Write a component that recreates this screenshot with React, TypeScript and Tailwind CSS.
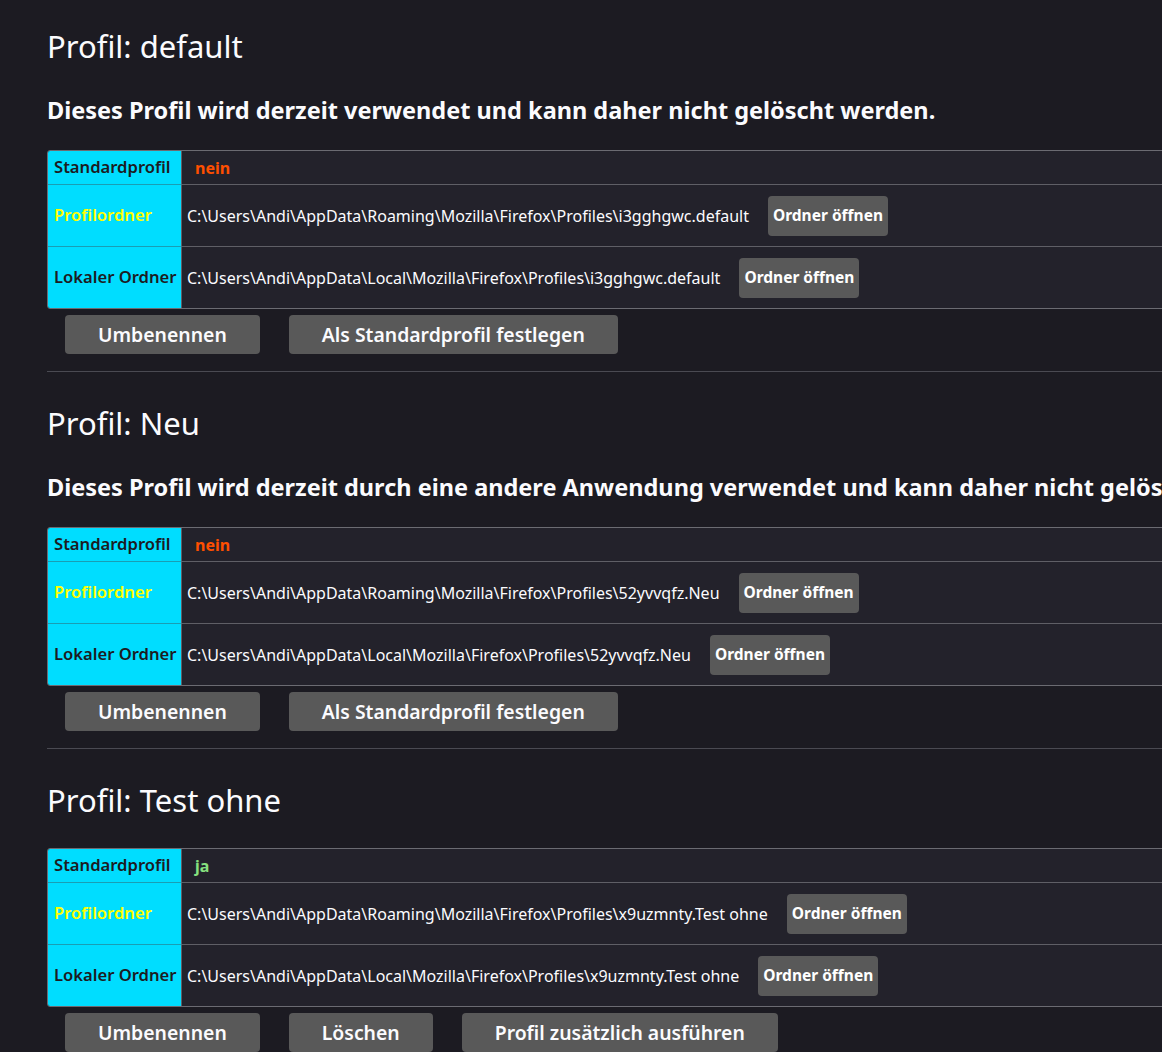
const profiles = [
  {
    name: 'default',
    note: 'Dieses Profil wird derzeit verwendet und kann daher nicht gelöscht werden.',
    isDefault: false,
    root: 'C:\\Users\\Andi\\AppData\\Roaming\\Mozilla\\Firefox\\Profiles\\i3gghgwc.default',
    local: 'C:\\Users\\Andi\\AppData\\Local\\Mozilla\\Firefox\\Profiles\\i3gghgwc.default',
    actions: ['Umbenennen', 'Als Standardprofil festlegen'],
  },
  {
    name: 'Neu',
    note: 'Dieses Profil wird derzeit durch eine andere Anwendung verwendet und kann daher nicht gelöscht werden.',
    isDefault: false,
    root: 'C:\\Users\\Andi\\AppData\\Roaming\\Mozilla\\Firefox\\Profiles\\52yvvqfz.Neu',
    local: 'C:\\Users\\Andi\\AppData\\Local\\Mozilla\\Firefox\\Profiles\\52yvvqfz.Neu',
    actions: ['Umbenennen', 'Als Standardprofil festlegen'],
  },
  {
    name: 'Test ohne',
    note: '',
    isDefault: true,
    root: 'C:\\Users\\Andi\\AppData\\Roaming\\Mozilla\\Firefox\\Profiles\\x9uzmnty.Test ohne',
    local: 'C:\\Users\\Andi\\AppData\\Local\\Mozilla\\Firefox\\Profiles\\x9uzmnty.Test ohne',
    actions: ['Umbenennen', 'Löschen', 'Profil zusätzlich ausführen'],
  },
]

type Profile = (typeof profiles)[number]

function FolderRow({ label, path, labelClass, last }: { label: string; path: string; labelClass: string; last?: boolean }) {
  return (
    <div className={`flex ${last ? '' : 'border-b border-[#5f5f66]'}`}>
      <div className={`w-[134px] shrink-0 bg-[#00ddff] border-r border-[#5f5f66] flex items-center pl-[6px] font-semibold text-[16.6px] whitespace-nowrap ${labelClass} ${last ? '' : 'border-b border-b-[#1a9db3] -mb-px'}`}>
        {label}
      </div>
      <div className="flex items-center h-[61px] pl-[5px] gap-[19px] text-[16px] text-[#fbfbfe]">
        <span className="whitespace-nowrap">{path}</span>
        <button className="h-[40px] px-[5px] rounded-[4px] bg-[#595959] text-white font-bold text-[15.5px]">Ordner öffnen</button>
      </div>
    </div>
  )
}

function ProfileSection({ p, first }: { p: Profile; first: boolean }) {
  return (
    <section className={first ? '' : 'border-t border-[#4a4a52] mt-[17px]'}>
      <h2 className={`text-[31px] leading-[40px] text-[#fbfbfe] ${first ? 'pt-[26px]' : 'pt-[31px]'}`}>Profil: {p.name}</h2>
      {p.note && (
        <h3 className="text-[23.5px] font-bold leading-[30px] text-[#fbfbfe] mt-[29px] whitespace-nowrap">{p.note}</h3>
      )}
      <div className={`${p.note ? 'mt-[25px]' : 'mt-[28px]'} border border-[#6b6b72] rounded-[3px] overflow-hidden bg-[#23222b]`}>
        <div className="flex border-b border-[#5f5f66]">
          <div className="w-[134px] shrink-0 bg-[#00ddff] border-r border-[#5f5f66] border-b border-b-[#1a9db3] -mb-px h-[34px] flex items-center pl-[6px] font-semibold text-[16.6px] text-[#1c1b22]">
            Standardprofil
          </div>
          <div className={`flex items-center pl-[13px] font-bold text-[16px] ${p.isDefault ? 'text-[#86e07f]' : 'text-[#ff4f00]'}`}>
            {p.isDefault ? 'ja' : 'nein'}
          </div>
        </div>
        <FolderRow label="Profilordner" path={p.root} labelClass="text-[#ffff00]" />
        <FolderRow label="Lokaler Ordner" path={p.local} labelClass="text-[#1c1b22]" last />
      </div>
      <div className="flex gap-[29px] pl-[18px] mt-[6px]">
        {p.actions.map((a) => (
          <button key={a} className="h-[39px] px-[33px] rounded-[4px] bg-[#595959] text-[#fbfbfe] font-semibold text-[19.4px]">
            {a}
          </button>
        ))}
      </div>
    </section>
  )
}

export default function App() {
  return (
    <div className="min-h-screen w-full overflow-hidden bg-[#1c1b22]" style={{ fontFamily: '"Noto Sans", "Open Sans", sans-serif' }}>
      <div className="w-[1300px] ml-[47px]">
        {profiles.map((p, i) => (
          <ProfileSection key={p.name} p={p} first={i === 0} />
        ))}
      </div>
    </div>
  )
}
